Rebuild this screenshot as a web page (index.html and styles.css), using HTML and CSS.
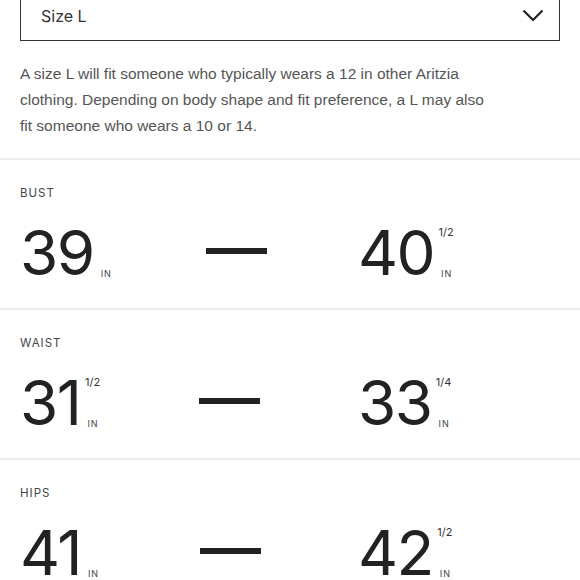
FILE: index.html
```html
<!DOCTYPE html>
<html lang="en">
<head>
<meta charset="utf-8">
<title>Size L</title>
<link rel="stylesheet" href="styles.css">
</head>
<body>
<div class="select">
  <span class="select-label">Size L</span>
  <svg class="chevron" width="22" height="13" viewBox="0 0 22 13"><path d="M1.5 1.5 L11 11 L20.5 1.5" fill="none" stroke="#222" stroke-width="2.2"/></svg>
</div>
<p class="desc">A size L will fit someone who typically wears a 12 in other Aritzia clothing. Depending on body shape and fit preference, a L may also fit someone who wears a 10 or 14.</p>

<section class="measure">
  <div class="label">BUST</div>
  <div class="row">
    <div class="val">
      <span class="num">39</span>
      <span class="units"><span class="frac"></span><span class="in">IN</span></span>
    </div>
    <div class="dash"></div>
    <div class="val right">
      <span class="num">40</span>
      <span class="units"><span class="frac">1/2</span><span class="in">IN</span></span>
    </div>
  </div>
</section>

<section class="measure">
  <div class="label">WAIST</div>
  <div class="row">
    <div class="val">
      <span class="num">31</span>
      <span class="units"><span class="frac">1/2</span><span class="in">IN</span></span>
    </div>
    <div class="dash"></div>
    <div class="val right">
      <span class="num">33</span>
      <span class="units"><span class="frac">1/4</span><span class="in">IN</span></span>
    </div>
  </div>
</section>

<section class="measure">
  <div class="label">HIPS</div>
  <div class="row">
    <div class="val">
      <span class="num">41</span>
      <span class="units"><span class="frac"></span><span class="in">IN</span></span>
    </div>
    <div class="dash"></div>
    <div class="val right">
      <span class="num">42</span>
      <span class="units"><span class="frac">1/2</span><span class="in">IN</span></span>
    </div>
  </div>
</section>
</body>
</html>
```

FILE: styles.css
```css
html, body {
  margin: 0;
  padding: 0;
  background: #fff;
}
body {
  font-family: "Inter", "Liberation Sans", sans-serif;
  color: #222;
  overflow: hidden;
}
.select {
  box-sizing: border-box;
  margin: -9px 20px 0;
  height: 50px;
  border: 1px solid #333;
  display: flex;
  align-items: center;
  justify-content: space-between;
  padding: 0 15px 0 20px;
}
.select-label {
  font-size: 16px;
  color: #333;
}
.chevron {
  display: block;
  margin-top: -2px;
}
.desc {
  margin: 20px 0 0;
  padding: 0 20px;
  max-width: 480px;
  font-family: "Liberation Sans", "Inter", sans-serif;
  font-size: 15.5px;
  line-height: 26px;
  color: #555;
}
.measure {
  margin-top: 19px;
  border-top: 2px solid #ededed;
  padding: 25px 0 0;
  height: 150px;
  box-sizing: border-box;
}
.measure + .measure {
  margin-top: 0;
}
.label {
  padding-left: 20px;
  font-size: 11.5px;
  line-height: 16px;
  letter-spacing: 1px;
  color: #444;
}
.row {
  display: flex;
  align-items: flex-start;
  padding: 0 122px 0 20px;
  margin-top: 20px;
}
.val {
  display: flex;
  align-items: stretch;
}
.val.right {
  width: 100px;
}
.num {
  font-size: 62px;
  line-height: 64px;
  font-variant-numeric: proportional-nums;
  letter-spacing: -1.5px;
  color: #222;
}
.units {
  display: flex;
  flex-direction: column;
  justify-content: space-between;
  align-items: center;
  width: 18px;
  margin-left: 3px;
  padding: 6px 0 7px;
}
.frac {
  font-size: 11px;
  line-height: 11px;
  color: #333;
  height: 11px;
}
.in {
  font-size: 9px;
  line-height: 9px;
  letter-spacing: 1px;
  margin-right: -1px;
  color: #444;
}
.dash {
  width: 61px;
  height: 6px;
  background: #222;
  margin: 27px auto 0;
}
```
